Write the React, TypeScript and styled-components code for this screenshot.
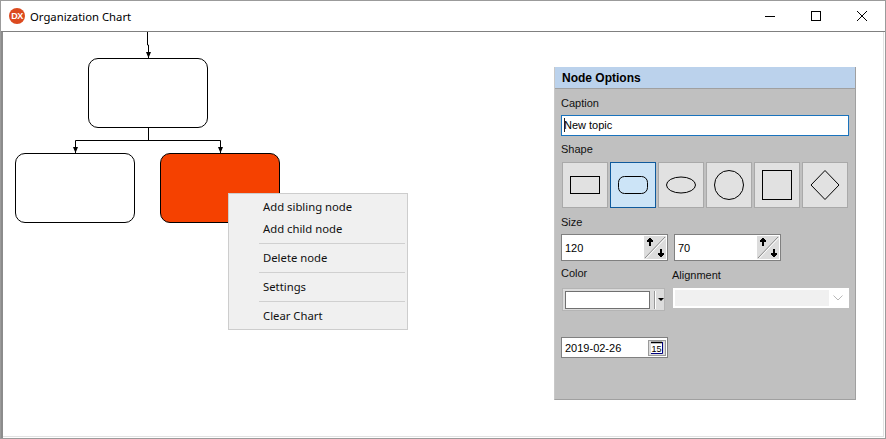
import React from "react";
import styled, { createGlobalStyle } from "styled-components";

const GlobalStyle = createGlobalStyle`
  html, body {
    margin: 0;
    padding: 0;
    background: #fff;
  }
  body {
    font-family: "Noto Sans", "Open Sans", sans-serif;
    font-size: 11.3px;
    color: #000;
  }
`;

const Win = styled.div`
  width: 886px;
  height: 439px;
  box-sizing: border-box;
  border: 1px solid #9b9b9b;
  display: flex;
  flex-direction: column;
  background: #fff;
`;

const TitleBar = styled.div`
  height: 30px;
  flex: none;
  display: flex;
  align-items: center;
  padding-left: 8px;
  border-bottom: 1px solid #808080;
`;

const Logo = styled.div`
  width: 16px;
  height: 16px;
  margin-top: -1px;
  border-radius: 50%;
  background: #dc4a1f;
  color: #fff;
  font: bold 9px/16px "Liberation Sans", sans-serif;
  letter-spacing: -0.5px;
  text-align: center;
`;

const Title = styled.div`
  margin-left: 5px;
  flex: 1;
`;

const WinButton = styled.div`
  width: 46px;
  height: 30px;
  display: flex;
  align-items: center;
  justify-content: center;
`;

const Body = styled.div`
  flex: 1;
  display: flex;
  border-left: 2px solid #8c8c8c;
`;

const Canvas = styled.div`
  flex: 1;
  position: relative;
  display: flex;
  justify-content: flex-end;
  align-items: flex-start;
  padding: 35px 27px 0 0;
  border-right: 1px solid #e2e2e2;
  border-bottom: 1px solid #e2e2e2;
  margin: 0 1px 1px 0;
`;

const Lines = styled.svg`
  position: absolute;
  left: 0;
  top: 0;
`;

const Node = styled.div<{ $x: number; $y: number; $fill?: string }>`
  position: absolute;
  left: ${(p) => p.$x}px;
  top: ${(p) => p.$y}px;
  width: 120px;
  height: 70px;
  box-sizing: border-box;
  border: 1px solid #000;
  border-radius: 10px;
  background: ${(p) => p.$fill || "#fff"};
`;

const Menu = styled.div`
  position: absolute;
  left: 225px;
  top: 161px;
  width: 180px;
  height: 137px;
  box-sizing: border-box;
  padding: 2px 2px 0 30px;
  background: #f0f0f0;
  border: 1px solid #cdcdcd;
`;

const MenuItem = styled.div`
  height: 22px;
  line-height: 21px;
  padding-left: 4px;
  color: #111;
`;

const MenuSep = styled.div`
  height: 1px;
  margin: 3px 0;
  background: #d0d0d0;
`;

const Panel = styled.div`
  position: relative;
  width: 302px;
  height: 333px;
  box-sizing: border-box;
  background: #c0c0c0;
  border-right: 1px solid #a0a0a0;
  border-bottom: 1px solid #a0a0a0;
  border-left: 1px solid #c8c8c8;
`;

const PanelHeader = styled.div`
  height: 22px;
  line-height: 22px;
  box-sizing: border-box;
  background: #bbd2ec;
  border-bottom: 1px solid #a0a0a0;
  padding-left: 7px;
  font-family: "Liberation Sans", Arial, sans-serif;
  font-weight: bold;
  font-size: 12px;
`;

const PanelBody = styled.div`
  display: flex;
  flex-direction: column;
  padding: 0 5px 0 6px;
  font-family: "Liberation Sans", Arial, sans-serif;
  font-size: 11px;
`;

const Label = styled.div<{ $top: number }>`
  margin-top: ${(p) => p.$top}px;
  height: 16px;
  line-height: 16px;
  color: #111;
`;

const CaptionInput = styled.div`
  position: relative;
  width: 288px;
  height: 21px;
  margin-top: 4px;
  box-sizing: border-box;
  border: 1px solid #1a73bd;
  background: #fff;
  padding-left: 2px;
  line-height: 19px;
`;

const Caret = styled.span`
  position: absolute;
  left: 2px;
  top: 2px;
  width: 1px;
  height: 14px;
  background: #222;
`;

const ShapeRow = styled.div`
  display: flex;
  gap: 2px;
  margin: 5px 0 0 1px;
`;

const ShapeButton = styled.div<{ $active?: boolean }>`
  width: 46px;
  height: 46px;
  box-sizing: border-box;
  border: 1px solid ${(p) => (p.$active ? "#0f5a9c" : "#a9a9a9")};
  background: ${(p) => (p.$active ? "#cce4f7" : "#e1e1e1")};
  display: flex;
  align-items: center;
  justify-content: center;
`;

const Row = styled.div`
  display: flex;
  gap: 6px;
  margin-top: 4px;
`;

const Field = styled.div`
  width: 107px;
  height: 27px;
  box-sizing: border-box;
  border: 1px solid #808080;
  background: #fff;
  display: flex;
  align-items: center;
  justify-content: space-between;
  padding: 0 1px 0 3px;
`;

const SpinButton = styled.div`
  width: 22px;
  height: 23px;
  display: flex;
`;

const OptionsRow = styled.div`
  display: grid;
  grid-template-columns: 111px 176px;
  margin-top: 4px;
`;

const ColorCell = styled.div``;

const ColorPicker = styled.div`
  margin: 7px 0 0 1px;
  width: 103px;
  height: 23px;
  box-sizing: border-box;
  border: 1px solid #b4b4b4;
  background: #dcdcdc;
  display: flex;
  align-items: center;
  padding-left: 2px;
`;

const Swatch = styled.div`
  width: 85px;
  height: 18px;
  box-sizing: border-box;
  border: 1px solid #707070;
  background: #fff;
`;

const SwatchDivider = styled.div`
  width: 1px;
  height: 18px;
  margin-left: 4px;
  background: #999;
  border-right: 1px solid #fff;
`;

const SwatchArrow = styled.div`
  margin-left: 2px;
  width: 0;
  height: 0;
  border-left: 3px solid transparent;
  border-right: 3px solid transparent;
  border-top: 3px solid #000;
`;

const AlignCell = styled.div`
  margin-top: 2px;
`;

const AlignCombo = styled.div`
  margin: 5px 0 0 1px;
  width: 176px;
  height: 20px;
  box-sizing: border-box;
  background: #fff;
  display: flex;
  align-items: center;
  padding: 0 6px 0 2px;
  justify-content: space-between;
`;

const AlignValue = styled.div`
  width: 154px;
  height: 16px;
  background: #f0f0f0;
`;

const DateField = styled(Field)`
  height: 21px;
  margin-top: 26px;
`;

const CalendarButton = styled.div`
  width: 18px;
  height: 16px;
  box-sizing: border-box;
  border: 1px solid #9a9a9a;
  background: #dcdcdc;
  display: flex;
  align-items: center;
  justify-content: center;
`;

const Spin = () => (
  <SpinButton>
    <svg width="22" height="23" viewBox="0 0 22 23">
      <rect width="22" height="23" fill="#dcdcdc" />
      <path d="M1 22L21 1" stroke="#8a8a8a" strokeWidth="1" />
      <path d="M2 22.5L21.5 2" stroke="#fff" strokeWidth="1" />
      <path d="M5 2H7V3H8V4H9V6H7V10H5V6H3V4H4V3H5Z" fill="#000" shapeRendering="crispEdges" />
      <path d="M16 13H18V17H20V19H19V20H18V21H16V20H15V19H14V17H16Z" fill="#000" shapeRendering="crispEdges" />
    </svg>
  </SpinButton>
);

const shapes = [
  <rect x="0.5" y="3.5" width="29" height="17" fill="none" stroke="#000" />,
  <rect x="0.5" y="3.5" width="29" height="17" rx="6" fill="none" stroke="#000" />,
  <ellipse cx="15" cy="12" rx="14.5" ry="8" fill="none" stroke="#000" />,
  <circle cx="15" cy="12" r="14.5" fill="none" stroke="#000" />,
  <rect x="0.5" y="-2.5" width="29" height="29" fill="none" stroke="#000" />,
  <path d="M15 -2.5L29 12L15 26.5L1 12Z" fill="none" stroke="#000" />,
];

export default function App() {
  return (
    <Win>
      <GlobalStyle />
      <TitleBar>
        <Logo>DX</Logo>
        <Title>Organization Chart</Title>
        <WinButton>
          <svg width="10" height="10">
            <path d="M0 5.5H10" stroke="#000" />
          </svg>
        </WinButton>
        <WinButton>
          <svg width="10" height="10">
            <rect x="0.5" y="0.5" width="9" height="9" fill="none" stroke="#000" />
          </svg>
        </WinButton>
        <WinButton>
          <svg width="10" height="10">
            <path d="M0 0L10 10M10 0L0 10" stroke="#000" />
          </svg>
        </WinButton>
      </TitleBar>
      <Body>
        <Canvas>
          <Lines width="300" height="130">
            <path
              d="M144.5 0V13H145.5V26M145.5 96V108.5M72.5 108.5H217.5M72.5 108.5V121M217.5 108.5V121"
              fill="none"
              stroke="#000"
            />
            <path d="M143 20H148L145.5 26Z M70 115H75L72.5 121Z M215 115H220L217.5 121Z" fill="#000" />
          </Lines>
          <Node $x={85} $y={26} />
          <Node $x={12} $y={121} />
          <Node $x={157} $y={121} $fill="#f54100" />
          <Panel>
            <PanelHeader>Node Options</PanelHeader>
            <PanelBody>
              <Label $top={6}>Caption</Label>
              <CaptionInput>
                <Caret />
                New topic
              </CaptionInput>
              <Label $top={5}>Shape</Label>
              <ShapeRow>
                {shapes.map((s, i) => (
                  <ShapeButton key={i} $active={i === 1}>
                    <svg width="30" height="24" viewBox="0 0 30 24" overflow="visible">
                      {s}
                    </svg>
                  </ShapeButton>
                ))}
              </ShapeRow>
              <Label $top={6}>Size</Label>
              <Row>
                <Field>
                  120
                  <Spin />
                </Field>
                <Field>
                  70
                  <Spin />
                </Field>
              </Row>
              <OptionsRow>
                <ColorCell>
                  <Label $top={0}>Color</Label>
                  <ColorPicker>
                    <Swatch />
                    <SwatchDivider />
                    <SwatchArrow />
                  </ColorPicker>
                </ColorCell>
                <AlignCell>
                  <Label $top={0}>Alignment</Label>
                  <AlignCombo>
                    <AlignValue />
                    <svg width="10" height="6">
                      <path d="M0.5 0.5L5 5L9.5 0.5" fill="none" stroke="#b8b8b8" />
                    </svg>
                  </AlignCombo>
                </AlignCell>
              </OptionsRow>
              <DateField>
                2019-02-26
                <CalendarButton>
                  <svg width="14" height="14" viewBox="0 0 14 14">
                    <rect x="1" y="1" width="11" height="11" fill="#fff" />
                    <path d="M1 1.5H12" stroke="#000" strokeWidth="1.5" />
                    <path d="M12.5 1V12.5H1" fill="none" stroke="#000080" />
                    <text
                      x="6.5"
                      y="11"
                      textAnchor="middle"
                      fontSize="9"
                      fontFamily="Liberation Sans, sans-serif"
                    >
                      15
                    </text>
                  </svg>
                </CalendarButton>
              </DateField>
            </PanelBody>
          </Panel>
          <Menu>
            <MenuItem>Add sibling node</MenuItem>
            <MenuItem>Add child node</MenuItem>
            <MenuSep />
            <MenuItem>Delete node</MenuItem>
            <MenuSep />
            <MenuItem>Settings</MenuItem>
            <MenuSep />
            <MenuItem>Clear Chart</MenuItem>
          </Menu>
        </Canvas>
      </Body>
    </Win>
  );
}
